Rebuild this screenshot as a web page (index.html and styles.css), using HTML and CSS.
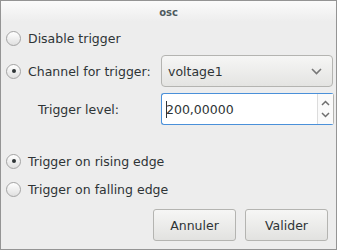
FILE: index.html
```html
<!DOCTYPE html>
<html>
<head>
<meta charset="utf-8">
<link rel="stylesheet" href="styles.css">
</head>
<body>
<div class="window">
  <div class="titlebar">osc</div>
  <div class="content">
    <label class="radio-row first">
      <span class="radio"></span>
      <span class="lbl">Disable trigger</span>
    </label>
    <div class="field-row combo-row">
      <label class="radio-row">
        <span class="radio checked"></span>
        <span class="lbl">Channel for trigger:</span>
      </label>
      <div class="combo">
        <span class="combo-text">voltage1</span>
        <svg class="chev" width="11" height="7" viewBox="0 0 11 7"><path d="M1 1 L5.5 5.5 L10 1" fill="none" stroke="#777" stroke-width="1.6"/></svg>
      </div>
    </div>
    <div class="field-row spin-row">
      <span class="lbl level">Trigger level:</span>
      <div class="spin">
        <span class="spin-text"><span class="caret"></span>200,00000</span>
        <div class="spin-btns">
          <svg width="9" height="6" viewBox="0 0 9 6"><path d="M1 5 L4.5 1.5 L8 5" fill="none" stroke="#6e6e6e" stroke-width="1.5"/></svg>
          <svg width="9" height="6" viewBox="0 0 9 6"><path d="M1 1 L4.5 4.5 L8 1" fill="none" stroke="#6e6e6e" stroke-width="1.5"/></svg>
        </div>
      </div>
    </div>
    <label class="radio-row edge1">
      <span class="radio checked"></span>
      <span class="lbl">Trigger on rising edge</span>
    </label>
    <label class="radio-row edge2">
      <span class="radio"></span>
      <span class="lbl">Trigger on falling edge</span>
    </label>
    <div class="buttons">
      <button class="btn">Annuler</button>
      <button class="btn">Valider</button>
    </div>
  </div>
</div>
</body>
</html>
```
FILE: styles.css
```css
html, body {
  margin: 0;
  padding: 0;
  background: #ededed;
}
.window {
  width: 337px;
  height: 250px;
  box-sizing: border-box;
  border: 1px solid #949494;
  background: #ededed;
  font-family: "DejaVu Sans", sans-serif;
  font-size: 12.5px;
  color: #2e3436;
  display: flex;
  flex-direction: column;
}
.titlebar {
  height: 26px;
  flex: none;
  background: linear-gradient(#fbfbfb, #ededed 80%);
  text-align: center;
  font-weight: bold;
  font-size: 10px;
  line-height: 24px;
  color: #4e5a5e;
}
.content {
  display: flex;
  flex-direction: column;
}
.radio-row {
  display: flex;
  align-items: center;
  height: 22px;
  padding-left: 5px;
}
.radio {
  width: 13px;
  height: 13px;
  border-radius: 50%;
  border: 1px solid #a3a3a3;
  background: linear-gradient(#ffffff, #e0e0e0);
  margin-right: 7px;
  position: relative;
  flex: none;
}
.radio.checked::after {
  content: "";
  position: absolute;
  left: 4.5px;
  top: 4.5px;
  width: 4px;
  height: 4px;
  border-radius: 50%;
  background: #2e3436;
}
.first {
  margin-top: 0;
}
.field-row {
  display: flex;
  align-items: center;
  height: 32px;
}
.combo-row {
  margin-top: 6px;
}
.combo-row .radio-row {
  width: 155px;
  flex: none;
}
.combo {
  width: 172px;
  height: 32px;
  box-sizing: border-box;
  border: 1px solid #b4b4b1;
  border-radius: 4px;
  background: linear-gradient(#f6f6f5, #e4e4e2);
  display: flex;
  align-items: center;
  justify-content: space-between;
  padding: 0 10px 0 6px;
}
.spin-row {
  margin-top: 6px;
}
.level {
  width: 123px;
  padding-left: 37px;
  flex: none;
}
.spin {
  width: 173px;
  height: 32px;
  box-sizing: border-box;
  border: 1px solid #4a90d9;
  border-right-color: #b4b4b1;
  border-radius: 3px;
  background: #fff;
  display: flex;
  align-items: center;
}
.spin-text {
  flex: 1;
  padding-left: 4px;
  position: relative;
}
.caret {
  position: absolute;
  left: 4px;
  top: -1px;
  width: 1px;
  height: 17px;
  background: #2e3436;
}
.spin-btns {
  width: 16px;
  height: 100%;
  border-left: 1px solid #dcdcdc;
  background: #fafafa;
  display: flex;
  flex-direction: column;
  align-items: center;
  justify-content: space-around;
  padding: 3px 0;
  box-sizing: border-box;
}
.edge1 {
  margin-top: 25px;
}
.edge2 {
  margin-top: 6px;
}
.buttons {
  display: flex;
  justify-content: flex-end;
  gap: 9px;
  margin-top: 9px;
  padding-right: 8px;
}
.btn {
  width: 83px;
  height: 32px;
  border: 1px solid #b4b4b1;
  border-radius: 3px;
  background: linear-gradient(#f6f6f5, #e2e2e0);
  font-family: "DejaVu Sans", sans-serif;
  font-size: 12.5px;
  color: #2e3436;
  padding: 0;
}
```
